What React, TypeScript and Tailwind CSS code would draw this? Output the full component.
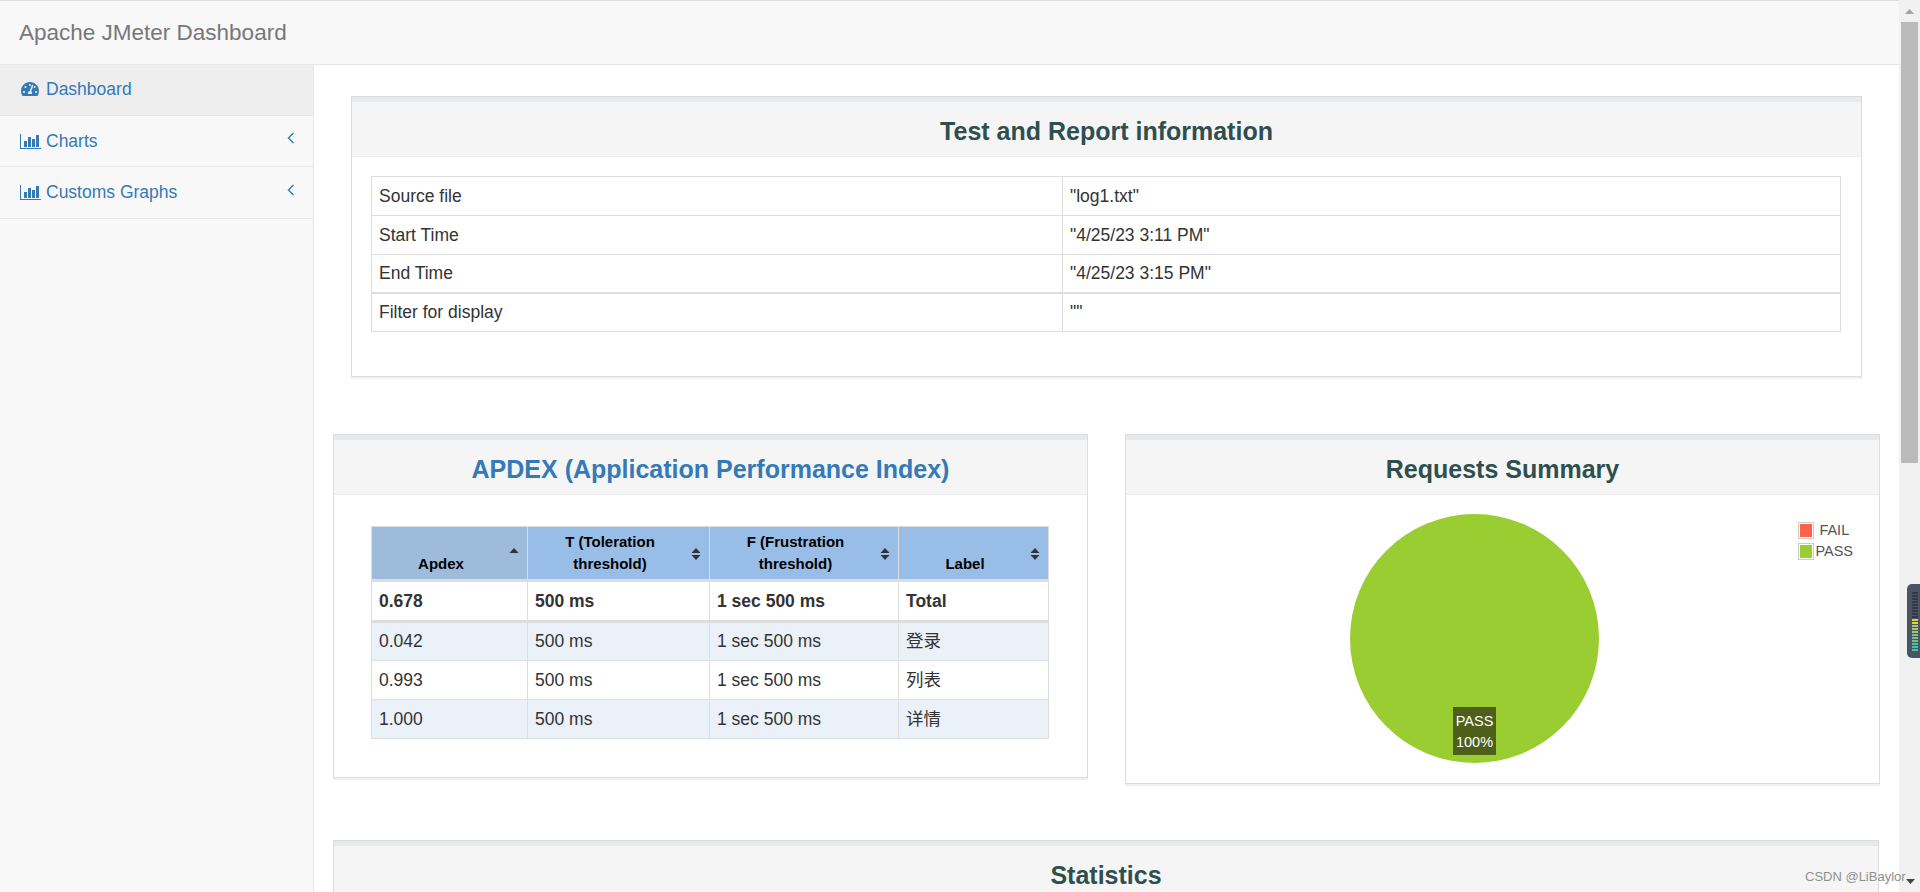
import React from "react";
import { FaTachometerAlt } from "react-icons/fa";

const infoRows = [
  ["Source file", '"log1.txt"', "h-[39px]"],
  ["Start Time", '"4/25/23 3:11 PM"', "h-[39px]"],
  ["End Time", '"4/25/23 3:15 PM"', "h-[38px]"],
];

const apdexRows = [
  ["0.042", "500 ms", "1 sec 500 ms", "登录", "bg-[#eaf1f9]"],
  ["0.993", "500 ms", "1 sec 500 ms", "列表", "bg-white"],
  ["1.000", "500 ms", "1 sec 500 ms", "详情", "bg-[#eaf1f9]"],
];

const ChartIcon = () => (
  <svg width="21" height="15" viewBox="0 0 21 15" className="text-[#337ab7] shrink-0" fill="currentColor">
    <rect x="0" y="0" width="1" height="15" />
    <rect x="0" y="14" width="21" height="1" />
    <rect x="4" y="7" width="3" height="6" />
    <rect x="8" y="3" width="3" height="10" />
    <rect x="12" y="5" width="3" height="8" />
    <rect x="16" y="1" width="3" height="12" />
  </svg>
);

const AngleLeft = () => (
  <svg width="8" height="12" viewBox="0 0 8 12" fill="none" stroke="#337ab7" strokeWidth="1.4" className="shrink-0 mt-[-6px]">
    <path d="M6.5 1 L1.5 6 L6.5 11" />
  </svg>
);

const SortIcon = ({ upOnly }: { upOnly?: boolean }) => (
  <svg width="10" height="14" viewBox="0 0 10 14" fill="#333" className="absolute right-[8px] top-[20px]">
    <path d="M5 1 L9.5 6 L0.5 6 Z" />
    {!upOnly && <path d="M5 13 L9.5 8 L0.5 8 Z" />}
  </svg>
);

const Panel = ({ title, titleClass, className, children }: { title: string; titleClass?: string; className?: string; children: React.ReactNode }) => (
  <div className={`border border-[#dcdcdc] bg-white shadow-[0_2px_0_#f0f0f0] ${className ?? ""}`}>
    <div className="border-t-[5px] border-[#e7eaec] border-b border-b-[#eeeeee] bg-[#f5f5f5] h-[60px] flex items-center justify-center pt-[5px]">
      <h3 className={`text-[25px] font-bold ${titleClass ?? "text-[#2f4f4f]"}`}>{title}</h3>
    </div>
    {children}
  </div>
);

const Th = ({ children, upOnly, bg }: { children: React.ReactNode; upOnly?: boolean; bg?: string }) => (
  <th className={`relative border border-[#dddddd] align-bottom text-center text-black text-[15px] leading-[22px] font-bold pl-[10px] pr-[27px] pb-[4px] ${bg ?? "bg-[#98bde6]"}`}>
    {children}
    <SortIcon upOnly={upOnly} />
  </th>
);

export default function App() {
  const cell = "border border-[#dddddd] px-[7px] align-middle";
  return (
    <div className="h-screen w-full overflow-hidden flex bg-white text-[17.5px] text-[#333333] font-['Liberation_Sans','Noto_Sans_CJK_SC',sans-serif]">
      <div className="flex-1 min-w-0 flex flex-col">
        <div className="h-[65px] shrink-0 bg-[#f8f8f8] border-t border-t-[#dddddd] border-b border-b-[#e7e7e7] flex items-center pl-[19px]">
          <span className="text-[22.5px] text-[#777777]">Apache JMeter Dashboard</span>
        </div>

        <div className="flex-1 flex min-h-0">
          <aside className="w-[314px] shrink-0 bg-[#f8f8f8] border-r border-[#e7e7e7] text-[#337ab7]">
            <div className="h-[51px] bg-[#eeeeee] border-b border-[#e7e7e7] flex items-center pl-[21px] pb-[2px] gap-[7px]">
              <FaTachometerAlt className="w-[18px] h-[18px] text-[#337ab7]" />
              <span>Dashboard</span>
            </div>
            <div className="h-[51px] border-b border-[#e7e7e7] flex items-center pl-[20px] pr-[18px] gap-[5px]">
              <ChartIcon />
              <span className="flex-1">Charts</span>
              <AngleLeft />
            </div>
            <div className="h-[52px] border-b border-[#e7e7e7] flex items-center pl-[20px] pr-[18px] gap-[5px]">
              <ChartIcon />
              <span className="flex-1">Customs Graphs</span>
              <AngleLeft />
            </div>
          </aside>

          <main className="flex-1 min-w-0 pt-[31px]">
            <Panel title="Test and Report information" className="ml-[37px] mr-[37px] h-[281px]">
              <div className="pt-[19px] pl-[19px] pr-[20px]">
                <table className="w-[1470px] table-fixed">
                  <colgroup>
                    <col className="w-[691px]" />
                    <col />
                  </colgroup>
                  <tbody>
                    {infoRows.map((r) => (
                      <tr key={r[0]} className={r[2]}>
                        <td className={cell}>{r[0]}</td>
                        <td className={cell}>{r[1]}</td>
                      </tr>
                    ))}
                    <tr className="h-[39px] border-t-[2px] border-[#dddddd]">
                      <td className={cell}>Filter for display</td>
                      <td className={`${cell} align-top pt-[5px]`}>""</td>
                    </tr>
                  </tbody>
                </table>
              </div>
            </Panel>

            <div className="flex items-start ml-[19px] mt-[57px] gap-[37px]">
              <Panel title="APDEX (Application Performance Index)" titleClass="text-[#337ab7]" className="w-[755px] h-[344px]">
                <div className="pt-[31px] pl-[37px]">
                  <table className="w-[678px] table-fixed">
                    <colgroup>
                      <col className="w-[156px]" />
                      <col className="w-[182px]" />
                      <col className="w-[189px]" />
                      <col />
                    </colgroup>
                    <thead>
                      <tr className="h-[54px]">
                        <Th upOnly bg="bg-[#9dbcdc]">Apdex</Th>
                        <Th>T (Toleration threshold)</Th>
                        <Th>F (Frustration threshold)</Th>
                        <Th>Label</Th>
                      </tr>
                    </thead>
                    <tbody>
                      <tr className="h-[41px] font-bold border-t-[3px] border-b-[3px] border-[#dddddd]">
                        <td className={cell}>0.678</td>
                        <td className={cell}>500 ms</td>
                        <td className={cell}>1 sec 500 ms</td>
                        <td className={cell}>Total</td>
                      </tr>
                      {apdexRows.map((r) => (
                        <tr key={r[0]} className={`h-[39px] ${r[4]}`}>
                          <td className={cell}>{r[0]}</td>
                          <td className={cell}>{r[1]}</td>
                          <td className={cell}>{r[2]}</td>
                          <td className={cell}>{r[3]}</td>
                        </tr>
                      ))}
                    </tbody>
                  </table>
                </div>
              </Panel>

              <Panel title="Requests Summary" className="w-[755px] h-[350px]">
                <div className="pt-[19px] pl-[224px] pr-[26px] flex justify-between items-start">
                  <div className="relative w-[249px] h-[249px]">
                    <svg width="249" height="249" viewBox="0 0 249 249">
                      <ellipse cx="124.5" cy="124.5" rx="124.5" ry="124.5" fill="#9acd32" />
                    </svg>
                    <div className="absolute left-[103px] top-[193px] w-[43px] h-[48px] bg-[#4e5f1a] text-white text-[14.5px] leading-[21px] text-center pt-[4px]">
                      PASS
                      <br />
                      100%
                    </div>
                  </div>
                  <div className="pt-[8px] text-[14.5px] text-[#545454] flex flex-col gap-[4px]">
                    <div className="flex items-center h-[17px]">
                      <span className="border border-[#cccccc] p-[1px] mr-[5px]">
                        <span className="block w-[12px] h-[13px] bg-[#ff6347]" />
                      </span>
                      FAIL
                    </div>
                    <div className="flex items-center h-[17px]">
                      <span className="border border-[#cccccc] p-[1px] mr-[1px]">
                        <span className="block w-[12px] h-[13px] bg-[#9acd32]" />
                      </span>
                      PASS
                    </div>
                  </div>
                </div>
              </Panel>
            </div>

            <Panel title="Statistics" className="ml-[19px] mt-[56px] mr-[20px] h-[100px]">
              <div />
            </Panel>
          </main>
        </div>
      </div>

      <div className="w-[21px] shrink-0 bg-[#f1f1f1] flex flex-col items-center">
        <div className="h-[22px] shrink-0 flex items-center justify-center">
          <svg width="9" height="5" viewBox="0 0 9 5" fill="#a3a3a3">
            <path d="M4.5 0 L9 5 L0 5 Z" />
          </svg>
        </div>
        <div className="w-[17px] h-[441px] bg-[#bababa]" />
      </div>

      {/* widget docked on the screen edge */}
      <div className="absolute right-0 top-[584px] w-[13px] h-[74px] bg-[#4c5362] rounded-l-[5px] flex flex-col gap-[1px] items-end pr-[2px] pt-[8px]">
        {Array.from({ length: 20 }).map((_, i) => (
          <span
            key={i}
            className={`block w-[6px] h-[2px] ${i < 9 ? "bg-[#353a46]" : i < 11 ? "bg-[#d8d24a]" : i < 14 ? "bg-[#a9c96a]" : i < 17 ? "bg-[#6fc48a]" : "bg-[#3fc4ae]"}`}
          />
        ))}
      </div>

      <div className="absolute left-[1805px] top-[867px] text-[13px] text-[#8f8f8f] whitespace-nowrap">CSDN @LiBaylor</div>
      <svg width="9" height="5" viewBox="0 0 9 5" fill="#444444" className="absolute left-[1906px] top-[879px]">
        <path d="M0 0 L9 0 L4.5 5 Z" />
      </svg>
    </div>
  );
}
